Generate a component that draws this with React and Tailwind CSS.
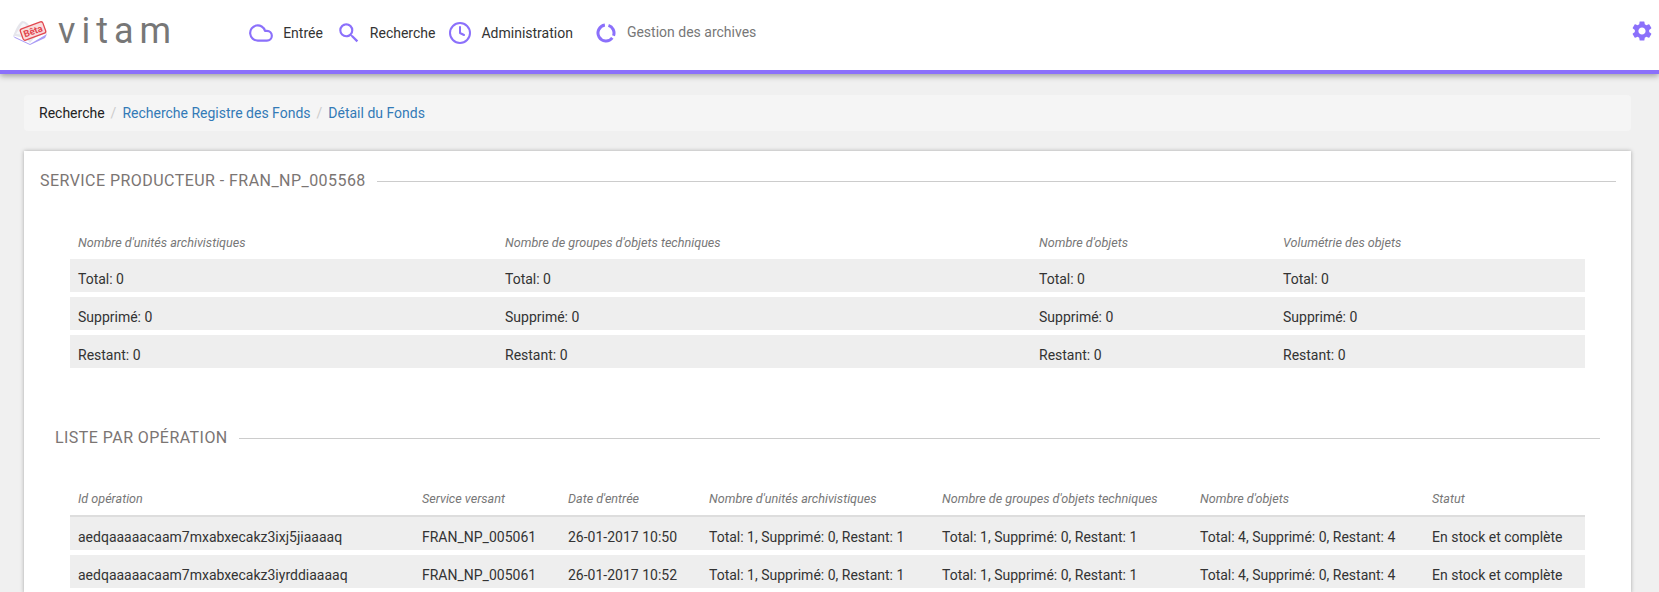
import React from 'react';
import { Cloud, Clock } from 'lucide-react';
import { MdSearch, MdSettings } from 'react-icons/md';

const summary = [
    ['Total: 0', 'Total: 0', 'Total: 0', 'Total: 0'],
    ['Supprimé: 0', 'Supprimé: 0', 'Supprimé: 0', 'Supprimé: 0'],
    ['Restant: 0', 'Restant: 0', 'Restant: 0', 'Restant: 0'],
];

const operations = [
    ['aedqaaaaacaam7mxabxecakz3ixj5jiaaaaq', 'FRAN_NP_005061', '26-01-2017 10:50'],
    ['aedqaaaaacaam7mxabxecakz3iyrddiaaaaq', 'FRAN_NP_005061', '26-01-2017 10:52'],
];

const SectionTitle = ({ children, className = '' }) => (
    <div className={`flex items-center ${className}`}>
        <span className="uppercase text-[16px] leading-[20px] tracking-[0.45px] text-[#7b7573] whitespace-nowrap">{children}</span>
        <div className="flex-1 ml-[11px] h-px bg-[#ccc]" />
    </div>
);

const BookLogo = () => (
    <svg width="36" height="26" viewBox="0 0 36 26" className="shrink-0">
        <path d="M1 17 L18 25 L35 15 L33 19 L18 26 L3 19 Z" fill="#a99cf5" />
        <path d="M1 17 C4 10 6 5 10 2 C14 2 17 5 18 9 L32 9 L35 15 C29 15 22 18 18 24 C14 19 7 17 1 17 Z" fill="#e6e6ec" />
        <path d="M4 15 C7 10 9 6 11 4 C14 5 16 8 17 12 L17 20 C13 17 8 15 4 15 Z" fill="#f6f6f9" />
        <g transform="rotate(-20 21 12)">
            <rect x="9" y="6" width="24" height="12" rx="2" fill="#f9dcdc" stroke="#e2474f" strokeWidth="1.3" />
            <text x="21" y="15.5" textAnchor="middle" fontSize="9.5" fontWeight="700" fill="#e2474f" fontFamily="Roboto, sans-serif">Bêta</text>
        </g>
    </svg>
);

const Donut = () => (
    <svg width="20" height="20" viewBox="0 0 20 20" fill="none" stroke="#8b70fb" strokeWidth="3">
        <path d="M12.47 2.39 A8 8 0 0 1 17.52 12.74" />
        <path d="M16.3 14.93 A8 8 0 1 1 8.89 2.08" />
    </svg>
);

export default function App() {
    return (
        <div className="h-screen overflow-hidden bg-[#f0f0f0] font-['Roboto',sans-serif] text-[14px] text-[#333]">
            <header className="relative z-10 h-[74px] flex items-center bg-white border-b-4 border-[#8b70fb] shadow-[0_2px_6px_rgba(0,0,0,0.35)]">
                <div className="ml-[12px] mt-[-6px]"><BookLogo /></div>
                <span className="ml-[10px] mt-[-9px] text-[36px] leading-none font-normal tracking-[6px] text-[#777]">vitam</span>
                <nav className="flex items-center ml-[71px] mt-[-4px]">
                    <Cloud size={26} className="text-[#8b70fb]" strokeWidth={2} />
                    <span className="ml-[9px]">Entrée</span>
                    <MdSearch size={26} className="ml-[13px] text-[#8b70fb]" />
                    <span className="ml-[8px]">Recherche</span>
                    <Clock size={24} className="ml-[13px] text-[#8b70fb]" strokeWidth={2} />
                    <span className="ml-[9px]">Administration</span>
                    <span className="ml-[23px]"><Donut /></span>
                    <span className="ml-[11px] mt-[-2px] text-[#777]">Gestion des archives</span>
                </nav>
                <MdSettings size={24} className="ml-auto mr-[5px] mt-[-8px] text-[#8b70fb]" />
            </header>

            <main className="pl-[24px] pr-[28px] pt-[21px]">
                <div className="h-[36px] flex items-center px-[15px] bg-[#f5f5f5] rounded">
                    <span className="text-[#222]">Recherche</span>
                    <span className="px-[6px] text-[#ccc]">/</span>
                    <a className="text-[#337ab7]">Recherche Registre des Fonds</a>
                    <span className="px-[6px] text-[#ccc]">/</span>
                    <a className="text-[#337ab7]">Détail du Fonds</a>
                </div>

                <section className="mt-[20px] bg-white shadow-[0_0_4px_rgba(0,0,0,0.3)] pt-[20px] pl-[16px] pr-[15px]">
                    <SectionTitle>Service producteur - FRAN_NP_005568</SectionTitle>

                    <table className="mt-[36px] ml-[30px] w-[1515px] table-fixed border-separate border-spacing-y-[5px]">
                        <thead>
                            <tr className="text-left text-[12.6px] italic text-[#777]">
                                <th className="w-[427px] font-normal px-[8px] h-[22px]">Nombre d'unités archivistiques</th>
                                <th className="w-[534px] font-normal px-[8px]">Nombre de groupes d'objets techniques</th>
                                <th className="w-[244px] font-normal px-[8px]">Nombre d'objets</th>
                                <th className="font-normal px-[8px]">Volumétrie des objets</th>
                            </tr>
                        </thead>
                        <tbody>
                            {summary.map((row, i) => (
                                <tr key={i} className="bg-[#eee]">
                                    {row.map((cell, j) => <td key={j} className="h-[33px] px-[8px] pt-[7px]">{cell}</td>)}
                                </tr>
                            ))}
                        </tbody>
                    </table>

                    <SectionTitle className="mt-[55px] ml-[15px] mr-[16px]">Liste par opération</SectionTitle>

                    <table className="mt-[33px] ml-[30px] w-[1515px] table-fixed border-separate border-spacing-y-[5px]">
                        <thead>
                            <tr className="text-left text-[12.6px] italic text-[#777]">
                                <th className="w-[344px] font-normal px-[8px] pt-[2px] h-[24px]">Id opération</th>
                                <th className="w-[146px] font-normal px-[8px] pt-[2px]">Service versant</th>
                                <th className="w-[141px] font-normal px-[8px] pt-[2px]">Date d'entrée</th>
                                <th className="w-[233px] font-normal px-[8px] pt-[2px]">Nombre d'unités archivistiques</th>
                                <th className="w-[258px] font-normal px-[8px] pt-[2px]">Nombre de groupes d'objets techniques</th>
                                <th className="w-[232px] font-normal px-[8px] pt-[2px]">Nombre d'objets</th>
                                <th className="font-normal px-[8px] pt-[2px]">Statut</th>
                            </tr>
                        </thead>
                        <tbody className="[&>tr:first-child>td]:border-t-2 [&>tr:first-child>td]:border-[#ddd] [&>tr:first-child>td]:h-[35px]">
                            {operations.map((op) => (
                                <tr key={op[0]} className="bg-[#eee]">
                                    <td className="h-[33px] px-[8px] pt-[7px]">{op[0]}</td>
                                    <td className="px-[8px] pt-[7px]">{op[1]}</td>
                                    <td className="px-[8px] pt-[7px]">{op[2]}</td>
                                    <td className="px-[8px] pt-[7px]">Total: 1, Supprimé: 0, Restant: 1</td>
                                    <td className="px-[8px] pt-[7px]">Total: 1, Supprimé: 0, Restant: 1</td>
                                    <td className="px-[8px] pt-[7px]">Total: 4, Supprimé: 0, Restant: 4</td>
                                    <td className="px-[8px] pt-[7px]">En stock et complète</td>
                                </tr>
                            ))}
                        </tbody>
                    </table>
                </section>
            </main>
        </div>
    );
}
